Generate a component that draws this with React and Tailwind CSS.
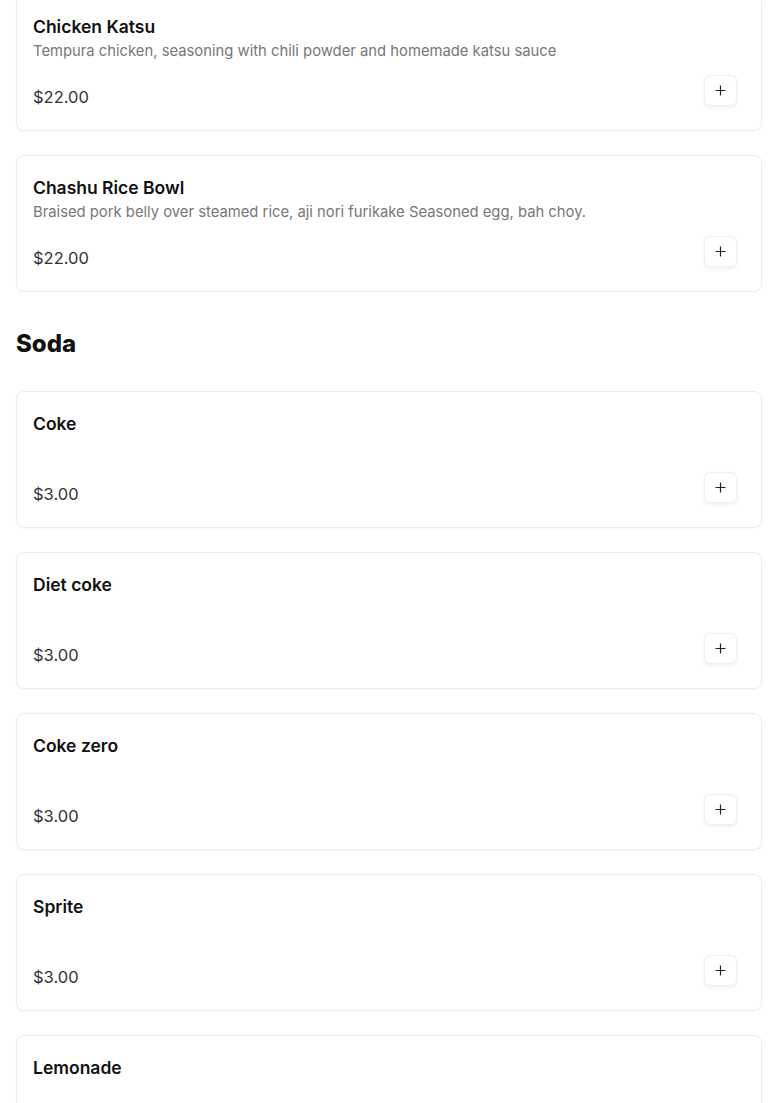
import React from 'react';

const sections = [
    {
        title: null,
        items: [
            { name: 'Chicken Katsu', desc: 'Tempura chicken, seasoning with chili powder and homemade katsu sauce', price: '$22.00' },
            { name: 'Chashu Rice Bowl', desc: 'Braised pork belly over steamed rice, aji nori furikake Seasoned egg, bah choy.', price: '$22.00' },
        ],
    },
    {
        title: 'Soda',
        items: [
            { name: 'Coke', desc: '', price: '$3.00' },
            { name: 'Diet coke', desc: '', price: '$3.00' },
            { name: 'Coke zero', desc: '', price: '$3.00' },
            { name: 'Sprite', desc: '', price: '$3.00' },
            { name: 'Lemonade', desc: '', price: '$3.00' },
        ],
    },
];

const PlusIcon = () => (
    <svg width="11" height="11" viewBox="0 0 11 11" fill="none">
        <path d="M5.5 0.5v10M0.5 5.5h10" stroke="#222" strokeWidth="1.2" />
    </svg>
);

const MenuItem = ({ item }) => {
    return (
        <div className="flex flex-col rounded-lg border border-[#ececec] bg-white px-4 pt-5 pb-[21px] shadow-[0_1px_2px_rgba(0,0,0,0.03)]">
            <div className="h-6 text-[17.5px] font-semibold leading-6 text-[#111]">{item.name}</div>
            <div className="mt-px h-[22px] text-[14.8px] leading-[22px] text-[#777]">{item.desc}</div>
            <div className="mt-[13px] flex items-start justify-between pr-2">
                <div className="mt-[10px] text-[16.5px] leading-6 text-[#333]">{item.price}</div>
                <button className="flex h-[31px] w-[33px] items-center justify-center rounded-md border border-[#f0f0f0] bg-white shadow-[0_2px_4px_rgba(0,0,0,0.06)]">
                    <PlusIcon />
                </button>
            </div>
        </div>
    );
};

const App = () => {
    return (
        <div className="min-h-screen bg-white px-4 font-['Inter',sans-serif]">
            <div className="-mt-[6px] flex flex-col">
                {sections.map((section, i) => (
                    <div key={i} className="flex flex-col">
                        {section.title && (
                            <h2 className="mt-9 mb-[31px] text-[24px] font-extrabold leading-8 text-[#111]">{section.title}</h2>
                        )}
                        <div className="flex flex-col gap-6">
                            {section.items.map((item) => (
                                <MenuItem key={item.name} item={item} />
                            ))}
                        </div>
                    </div>
                ))}
            </div>
        </div>
    );
};

export default App;
